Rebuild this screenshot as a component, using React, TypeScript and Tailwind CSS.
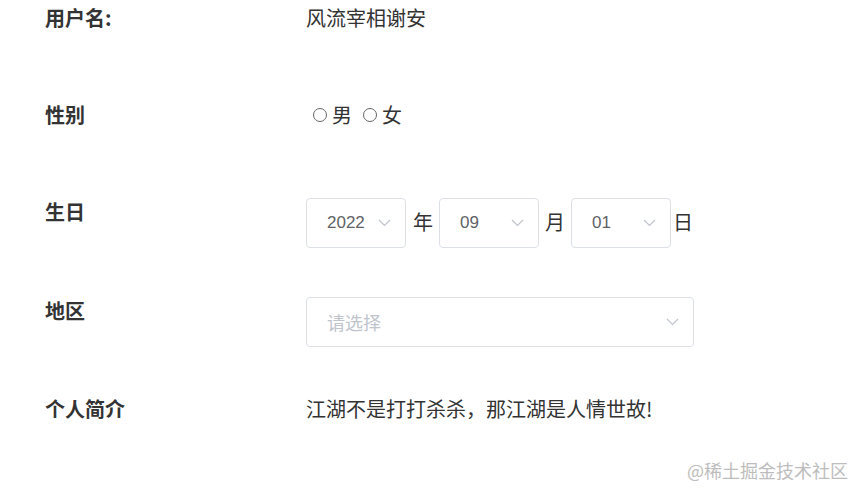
import React from 'react';

const cjk = { fontFamily: '"Noto Sans CJK SC", "Noto Sans", sans-serif' };
const num = { fontFamily: '"Liberation Sans", "Noto Sans CJK SC", sans-serif' };

const Chevron: React.FC = () => (
  <svg width="13" height="8" viewBox="0 0 13 8" fill="none" className="shrink-0">
    <path d="M1 1l5.5 5.5L12 1" stroke="#c0c4cc" strokeWidth="1.2" />
  </svg>
);

const Select: React.FC<{ value?: string; placeholder?: string; className?: string }> = ({ value, placeholder, className }) => (
  <div
    className={`flex shrink-0 items-center justify-between h-[50px] border border-[#dcdfe6] rounded-[4px] bg-white pl-[20px] pr-[14px] ${className ?? ''}`}
  >
    {value ? (
      <span className="text-[17px] text-[#606266]" style={num}>{value}</span>
    ) : (
      <span className="text-[18px] text-[#c0c4cc]" style={cjk}>{placeholder}</span>
    )}
    <Chevron />
  </div>
);

const Row: React.FC<{ label: string; className?: string; children: React.ReactNode }> = ({ label, className, children }) => (
  <div className={`flex items-start min-h-[50px] ${className ?? ''}`}>
    <div className="w-[261px] shrink-0 text-[20px] leading-[28px] font-bold text-[#333]">{label}</div>
    <div className="flex items-center text-[20px] leading-[28px] text-[#333]">{children}</div>
  </div>
);

const Radio: React.FC<{ label: string }> = ({ label }) => (
  <label className="flex items-center">
    <span className="w-[14px] h-[14px] rounded-full border border-[#666] mr-[5px]" />
    <span>{label}</span>
  </label>
);

export default function App() {
  return (
    <div className="relative w-[865px] h-[497px] bg-white overflow-hidden" style={cjk}>
      <div className="flex flex-col pl-[45px] pt-[4px]">
        <Row label="用户名:">
          <span>风流宰相谢安</span>
        </Row>
        <Row label="性别" className="mt-[47px]">
          <div className="flex items-center gap-[11px] pl-[7px]">
            <Radio label="男" />
            <Radio label="女" />
          </div>
        </Row>
        <Row label="生日" className="mt-[47px]">
          <Select value="2022" className="w-[100px]" />
          <span className="ml-[7px] mr-[6px] -mt-[2px]">年</span>
          <Select value="09" className="w-[100px]" />
          <span className="ml-[6px] mr-[6px] -mt-[2px]">月</span>
          <Select value="01" className="w-[100px]" />
          <span className="ml-[2px] -mt-[2px]">日</span>
        </Row>
        <Row label="地区" className="mt-[49px]">
          <Select placeholder="请选择" className="w-[388px]" />
        </Row>
        <Row label="个人简介" className="mt-[48px]">
          <span>江湖不是打打杀杀，那江湖是人情世故!</span>
        </Row>
      </div>
      <div className="absolute right-[17px] bottom-[15px] text-[18px] leading-[24px] text-[#bdbdbd]">
        @稀土掘金技术社区
      </div>
    </div>
  );
}
